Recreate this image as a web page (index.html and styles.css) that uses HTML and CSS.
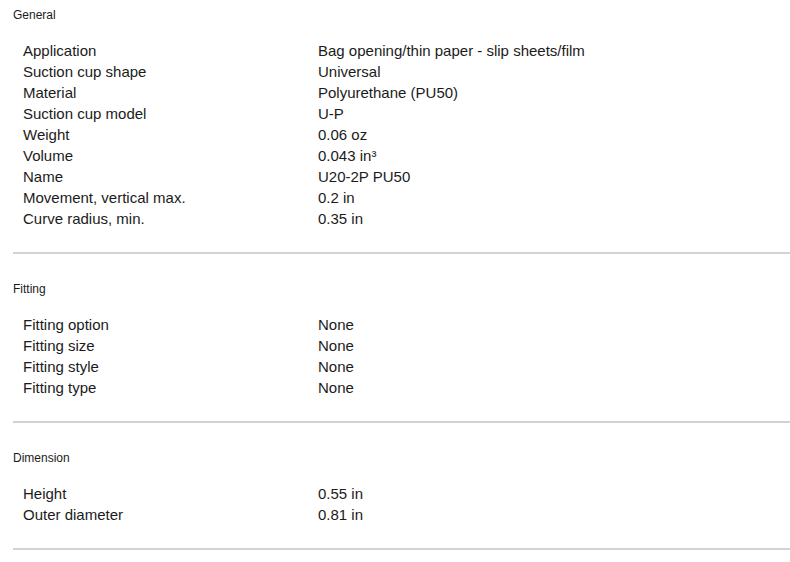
FILE: index.html
```html
<!DOCTYPE html>
<html>
<head>
<meta charset="utf-8">
<link rel="stylesheet" href="styles.css">
</head>
<body>
<div class="specs">
  <section class="group">
    <h3 class="group-title">General</h3>
    <dl class="rows">
      <div class="row"><dt>Application</dt><dd>Bag opening/thin paper - slip sheets/film</dd></div>
      <div class="row"><dt>Suction cup shape</dt><dd>Universal</dd></div>
      <div class="row"><dt>Material</dt><dd>Polyurethane (PU50)</dd></div>
      <div class="row"><dt>Suction cup model</dt><dd>U-P</dd></div>
      <div class="row"><dt>Weight</dt><dd>0.06 oz</dd></div>
      <div class="row"><dt>Volume</dt><dd>0.043 in³</dd></div>
      <div class="row"><dt>Name</dt><dd>U20-2P PU50</dd></div>
      <div class="row"><dt>Movement, vertical max.</dt><dd>0.2 in</dd></div>
      <div class="row"><dt>Curve radius, min.</dt><dd>0.35 in</dd></div>
    </dl>
  </section>
  <section class="group">
    <h3 class="group-title">Fitting</h3>
    <dl class="rows">
      <div class="row"><dt>Fitting option</dt><dd>None</dd></div>
      <div class="row"><dt>Fitting size</dt><dd>None</dd></div>
      <div class="row"><dt>Fitting style</dt><dd>None</dd></div>
      <div class="row"><dt>Fitting type</dt><dd>None</dd></div>
    </dl>
  </section>
  <section class="group">
    <h3 class="group-title">Dimension</h3>
    <dl class="rows">
      <div class="row"><dt>Height</dt><dd>0.55 in</dd></div>
      <div class="row"><dt>Outer diameter</dt><dd>0.81 in</dd></div>
    </dl>
  </section>
</div>
</body>
</html>
```
FILE: styles.css
```css
html, body {
  margin: 0;
  padding: 0;
  background: #ffffff;
}
body {
  font-family: "Liberation Sans", Arial, sans-serif;
  color: #1b1b1b;
}
.specs {
  padding: 7px 0 0 13px;
}
.group {
  border-bottom: 2px solid #d0d2d5;
  padding-bottom: 22.5px;
  margin-bottom: 27.5px;
}
.group-title {
  margin: 0;
  font-size: 12px;
  line-height: 16px;
  font-weight: normal;
}
.rows {
  margin: 17px 0 0;
  padding: 0 0 0 10px;
}
.row {
  display: grid;
  grid-template-columns: 295px 1fr;
  font-size: 15px;
  line-height: 21px;
}
.row dt, .row dd {
  margin: 0;
}
```
